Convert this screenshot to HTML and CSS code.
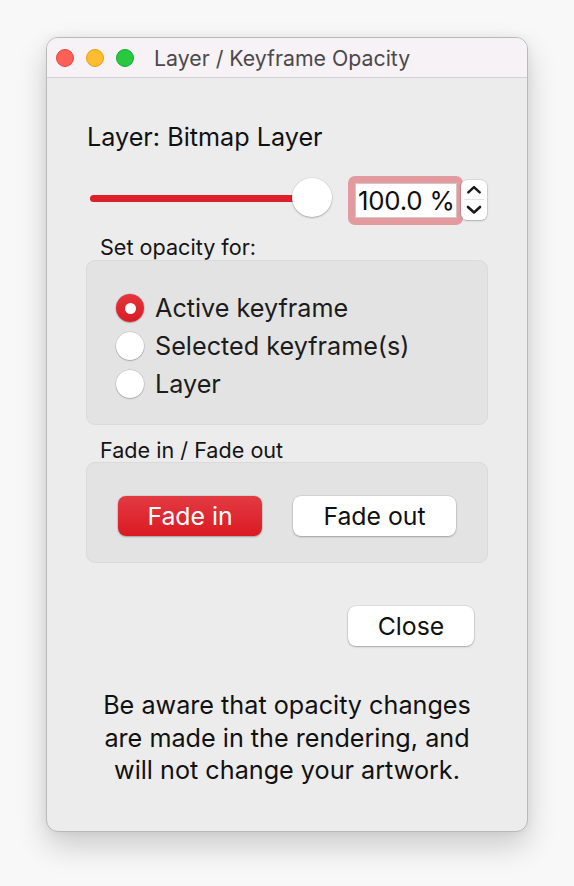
FILE: index.html
```html
<!DOCTYPE html>
<html>
<head>
<meta charset="utf-8">
<link rel="stylesheet" href="styles.css">
</head>
<body>
<div class="window">
  <div class="titlebar">
    <div class="lights">
      <span class="light red"></span>
      <span class="light yellow"></span>
      <span class="light green"></span>
    </div>
    <div class="title">Layer / Keyframe Opacity</div>
  </div>
  <div class="content">
    <div class="layer-name">Layer: Bitmap Layer</div>
    <div class="slider-row">
      <div class="slider">
        <div class="track"></div>
        <div class="knob"></div>
      </div>
      <div class="field-ring"><div class="field">100.0 %</div></div>
      <div class="stepper">
        <svg class="step" width="20" height="19" viewBox="0 0 20 19"><path d="M4 12 L10 6.5 L16 12" fill="none" stroke="#1a1a1a" stroke-width="2.6" stroke-linecap="round" stroke-linejoin="round"/></svg>
        <svg class="step" width="20" height="19" viewBox="0 0 20 19"><path d="M4 7 L10 12.5 L16 7" fill="none" stroke="#1a1a1a" stroke-width="2.6" stroke-linecap="round" stroke-linejoin="round"/></svg>
      </div>
    </div>
    <div class="group-label">Set opacity for:</div>
    <div class="group radios">
      <div class="radio-row"><span class="radio on"></span><span>Active keyframe</span></div>
      <div class="radio-row"><span class="radio"></span><span>Selected keyframe(s)</span></div>
      <div class="radio-row"><span class="radio"></span><span>Layer</span></div>
    </div>
    <div class="group-label fade-label">Fade in / Fade out</div>
    <div class="group fades">
      <div class="btn primary fade-in">Fade in</div>
      <div class="btn fade-out">Fade out</div>
    </div>
    <div class="close-row">
      <div class="btn close">Close</div>
    </div>
    <p class="note">Be aware that opacity changes<br>are made in the rendering, and<br>will not change your artwork.</p>
  </div>
</div>
</body>
</html>
```

FILE: styles.css
```css
* { box-sizing: border-box; }
html, body { margin: 0; padding: 0; }
body {
  width: 574px;
  height: 886px;
  background: #f8f8f8;
  padding: 37px 0 0 46px;
  font-family: "Inter", "Liberation Sans", sans-serif;
  color: #1b1b1b;
}
.window {
  width: 482px;
  height: 795px;
  background: #ececec;
  border-radius: 12px;
  border: 1px solid #b9b9b9;
  box-shadow: 0 14px 30px rgba(0,0,0,0.18), 0 0 10px rgba(0,0,0,0.06);
  overflow: hidden;
}
.titlebar {
  height: 40px;
  background: #f6f2f6;
  border-bottom: 1px solid #d3d1d3;
  display: flex;
  align-items: center;
  padding-left: 9px;
}
.lights { display: flex; gap: 12px; }
.light { width: 18px; height: 18px; border-radius: 50%; display: block; }
.light.red { background: #fe5f57; border: 1px solid #e2463f; }
.light.yellow { background: #febc2e; border: 1px solid #e1a116; }
.light.green { background: #28c840; border: 1px solid #12ac28; }
.title {
  margin-left: 20px;
  font-size: 21.3px;
  color: #4b494b;
}
.content {
  padding: 44px 39px 0 39px;
}
.layer-name {
  font-size: 25.2px;
  color: #111;
  margin-left: 1px;
  line-height: 30px;
}
.slider-row {
  display: flex;
  align-items: center;
  margin-top: 23px;
  height: 50px;
}
.slider {
  position: relative;
  width: 242px;
  height: 40px;
  margin-left: 4px;
  margin-bottom: 4px;
}
.track {
  position: absolute;
  left: 0;
  top: 16.5px;
  width: 216px;
  height: 7px;
  border-radius: 4px;
  background: #dc1f2b;
}
.knob {
  position: absolute;
  left: 202px;
  top: 0;
  width: 40px;
  height: 39px;
  border-radius: 50%;
  background: #fff;
  box-shadow: 0 1px 2px rgba(0,0,0,0.25), 0 0 0 0.5px rgba(0,0,0,0.08);
}
.field-ring {
  margin-left: 16px;
  width: 115px;
  height: 49px;
  border-radius: 7px;
  background: #e29a9e;
  padding: 7px 6px 7px 7px;
}
.field {
  background: #fff;
  height: 35px;
  font-size: 25.8px;
  line-height: 36px;
  padding-left: 3px;
  color: #0e0e0e;
  white-space: nowrap;
  letter-spacing: -0.2px;
  box-shadow: inset 0 0 0 1px #d8c4c5;
}
.stepper {
  margin-left: -2px;
  width: 26px;
  height: 40px;
  background: #fff;
  border-radius: 6px;
  box-shadow: 0 0 0 0.5px rgba(0,0,0,0.15), 0 1px 2px rgba(0,0,0,0.2);
  display: flex;
  flex-direction: column;
  align-items: center;
  justify-content: center;
}
.step { display: block; }
.step:first-child { border-bottom: 1px solid #e3e3e3; }
.group-label {
  font-size: 21.6px;
  color: #141414;
  margin: 10px 0 0 14px;
  line-height: 24px;
}
.group {
  background: #e3e3e3;
  border: 1px solid #dadada;
  border-radius: 9px;
  width: 402px;
}
.radios {
  margin-top: 1px;
  height: 165px;
  padding: 33px 0 0 29px;
  display: flex;
  flex-direction: column;
  gap: 10px;
}
.radio-row {
  display: flex;
  align-items: center;
  gap: 11px;
  font-size: 25.2px;
  color: #1c1c1c;
  height: 28px;
}
.radio {
  width: 28px;
  height: 28px;
  border-radius: 50%;
  background: #fff;
  box-shadow: 0 0 0 0.5px rgba(0,0,0,0.18), 0 1px 1.5px rgba(0,0,0,0.18);
  display: flex;
  align-items: center;
  justify-content: center;
}
.radio.on {
  background: linear-gradient(#e6353d, #d81c24);
}
.radio.on::after {
  content: "";
  width: 11px;
  height: 11px;
  border-radius: 50%;
  background: #fff;
}
.fade-label { margin-top: 13px; }
.fades {
  margin-top: 0;
  height: 101px;
  display: flex;
  align-items: flex-start;
  padding: 33px 0 0 31px;
  gap: 31px;
}
.btn {
  height: 40px;
  border-radius: 8px;
  background: #fff;
  font-size: 24.8px;
  color: #111;
  display: flex;
  align-items: center;
  justify-content: center;
  box-shadow: 0 0 0 0.5px rgba(0,0,0,0.12), 0 1px 2px rgba(0,0,0,0.25);
}
.btn.primary {
  background: linear-gradient(#e33a43, #da1a22);
  color: #fff;
}
.fade-in { width: 144px; }
.fade-out { width: 163px; }
.close-row {
  display: flex;
  justify-content: flex-end;
  margin-top: 43px;
  width: 388px;
}
.close { width: 126px; }
.note {
  margin: 43px 0 0 0;
  width: 402px;
  text-align: center;
  font-size: 25.2px;
  line-height: 32.5px;
  color: #111;
}
```
